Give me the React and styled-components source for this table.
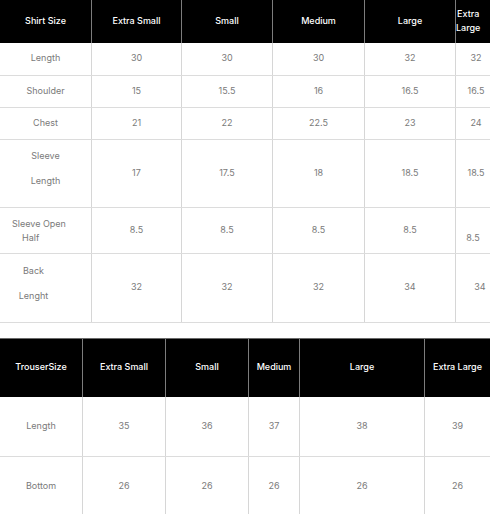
import React from 'react';
import styled, { createGlobalStyle } from 'styled-components';

const Global = createGlobalStyle`
  body {
    margin: 0;
    background: #fff;
    font-family: Inter, "Noto Sans", sans-serif;
  }
`;

const Page = styled.div`
  width: 490px;
  overflow: hidden;
  display: flex;
  flex-direction: column;
  gap: 15px;
`;

const Table = styled.div`
  display: flex;
  flex-direction: column;
  width: 100%;
  border-top: ${(p) => (p.$topBorder ? '1px solid #6a6a6a' : 'none')};
`;

const Row = styled.div`
  display: grid;
  grid-template-columns: ${(p) => p.$cols};
  height: ${(p) => p.$h}px;
  box-sizing: border-box;
  background: ${(p) => (p.$head ? '#000' : '#fff')};
  border-bottom: ${(p) => (p.$head ? 'none' : '1px solid #dcdcdc')};
`;

const Cell = styled.div`
  display: flex;
  flex-direction: column;
  justify-content: ${(p) => p.$justify || 'center'};
  align-items: center;
  box-sizing: border-box;
  padding: ${(p) => p.$pad || '0 0 2px 0'};
  font-size: 9px;
  line-height: ${(p) => p.$lh || 14}px;
  text-align: center;
  color: ${(p) => (p.$head ? '#fff' : '#7a7a7a')};
  font-weight: ${(p) => (p.$head ? 500 : 400)};
  border-left: 1px solid ${(p) => (p.$head ? '#7c7c7c' : '#d6d6d6')};
  &:first-child {
    border-left: none;
  }
`;

const Line = styled.span`
  display: block;
  margin-left: ${(p) => p.$indent || 0}px;
  align-self: ${(p) => (p.$indent ? 'flex-start' : 'center')};
`;

const shirtCols = '91px 90px 91px 92px 91px 1fr';
const trouserCols = '82px 83px 83px 51px 125px 1fr';

const shirtRows = [
  { h: 33, label: 'Length', v: ['30', '30', '30', '32', '32'] },
  { h: 32, label: 'Shoulder', v: ['15', '15.5', '16', '16.5', '16.5'] },
  { h: 32, label: 'Chest', v: ['21', '22', '22.5', '23', '24'] },
];

const lastPad = '0 0 2px 6px';

export default function App() {
  return (
    <Page>
      <Global />
      <Table>
        <Row $head $cols={shirtCols} $h={43}>
          <Cell $head>Shirt Size</Cell>
          <Cell $head>Extra Small</Cell>
          <Cell $head>Small</Cell>
          <Cell $head>Medium</Cell>
          <Cell $head>Large</Cell>
          <Cell $head $pad="0 10px 2px 0">
            <Line>Extra</Line>
            <Line>Large</Line>
          </Cell>
        </Row>
        {shirtRows.map((r) => (
          <Row key={r.label} $cols={shirtCols} $h={r.h}>
            <Cell>{r.label}</Cell>
            {r.v.map((n, i) => (
              <Cell key={i} $pad={i === 4 ? lastPad : undefined}>{n}</Cell>
            ))}
          </Row>
        ))}
        <Row $cols={shirtCols} $h={68}>
          <Cell $justify="flex-start" $lh={25} $pad="3px 0 0 0">
            <Line>Sleeve</Line>
            <Line>Length</Line>
          </Cell>
          <Cell>17</Cell>
          <Cell>17.5</Cell>
          <Cell>18</Cell>
          <Cell>18.5</Cell>
          <Cell $pad={lastPad}>18.5</Cell>
        </Row>
        <Row $cols={shirtCols} $h={46}>
          <Cell $justify="flex-start" $pad="9px 0 0 12px">
            <Line $indent={0.01}>Sleeve Open</Line>
            <Line $indent={10}>Half</Line>
          </Cell>
          <Cell>8.5</Cell>
          <Cell>8.5</Cell>
          <Cell>8.5</Cell>
          <Cell>8.5</Cell>
          <Cell $justify="flex-start" $pad="23px 0 0 0">8.5</Cell>
        </Row>
        <Row $cols={shirtCols} $h={69}>
          <Cell $justify="flex-start" $lh={25} $pad="4px 24px 0 0">
            <Line>Back</Line>
            <Line>Lenght</Line>
          </Cell>
          <Cell>32</Cell>
          <Cell>32</Cell>
          <Cell>32</Cell>
          <Cell>34</Cell>
          <Cell $pad="0 0 2px 14px">34</Cell>
        </Row>
      </Table>

      <Table $topBorder>
        <Row $head $cols={trouserCols} $h={58}>
          <Cell $head>TrouserSize</Cell>
          <Cell $head>Extra Small</Cell>
          <Cell $head>Small</Cell>
          <Cell $head>Medium</Cell>
          <Cell $head>Large</Cell>
          <Cell $head>Extra Large</Cell>
        </Row>
        <Row $cols={trouserCols} $h={60}>
          <Cell>Length</Cell>
          <Cell>35</Cell>
          <Cell>36</Cell>
          <Cell>37</Cell>
          <Cell>38</Cell>
          <Cell>39</Cell>
        </Row>
        <Row $cols={trouserCols} $h={60}>
          <Cell>Bottom</Cell>
          <Cell>26</Cell>
          <Cell>26</Cell>
          <Cell>26</Cell>
          <Cell>26</Cell>
          <Cell>26</Cell>
        </Row>
      </Table>
    </Page>
  );
}
